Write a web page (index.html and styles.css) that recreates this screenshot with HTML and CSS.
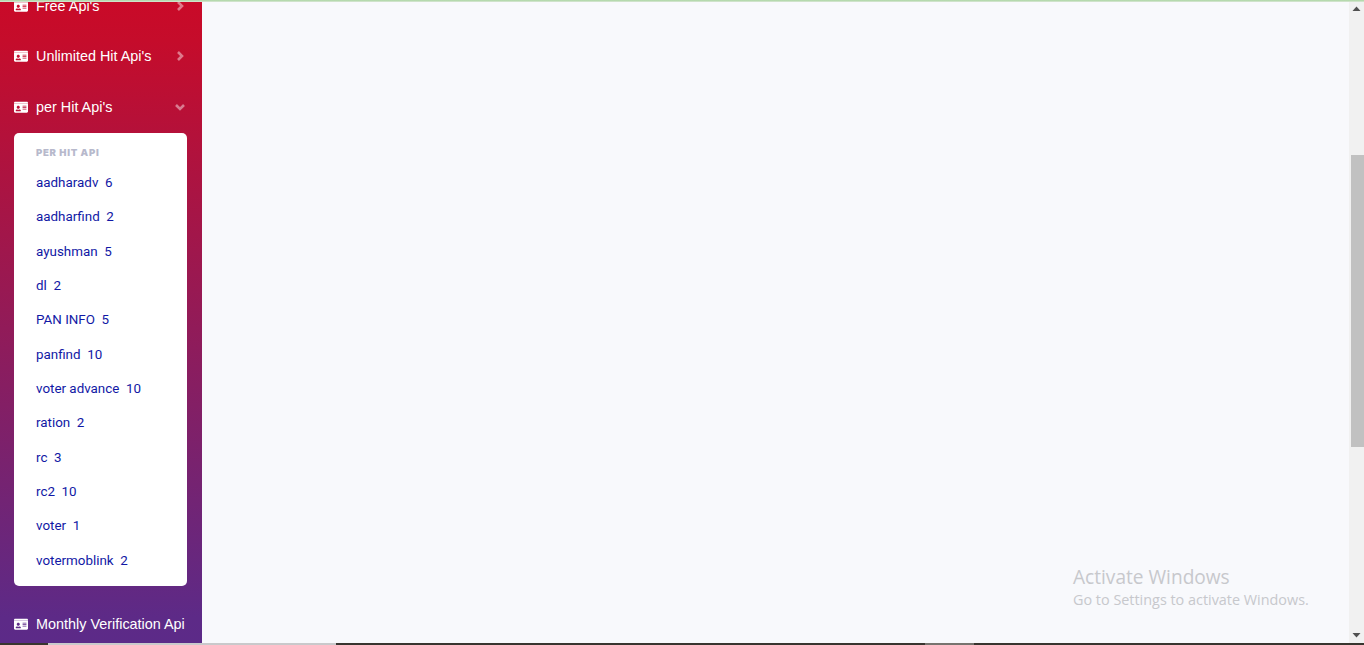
FILE: index.html
```html
<!DOCTYPE html>
<html lang="en">
<head>
<meta charset="utf-8">
<title>Per Hit Api</title>
<link rel="stylesheet" href="styles.css">
</head>
<body>
<div class="topline"></div>
<div class="app">
  <aside class="sidebar">
    <a class="nav-link first"><svg class="idcard" viewBox="0 0 576 512"><use href="#id"/></svg><span class="label">Free Api's</span><svg class="chev" viewBox="0 0 10 12"><polyline points="3,2 7,6 3,10"/></svg></a>
    <a class="nav-link"><svg class="idcard" viewBox="0 0 576 512"><path id="id" d="M528 32H48C21.5 32 0 53.5 0 80v30h576V80c0-26.500-21.500-48-48-48zM0 432c0 26.500 21.500 48 48 48h480c26.500 0 48-21.500 48-48V118H0v314zm352-232c0-4.400 3.600-8 8-8h144c4.400 0 8 3.600 8 8v16c0 4.400-3.600 8-8 8H360c-4.400 0-8-3.600-8-8v-16zm0 64c0-4.400 3.600-8 8-8h144c4.400 0 8 3.600 8 8v16c0 4.400-3.600 8-8 8H360c-4.400 0-8-3.600-8-8v-16zm0 64c0-4.400 3.600-8 8-8h144c4.400 0 8 3.600 8 8v16c0 4.400-3.600 8-8 8H360c-4.400 0-8-3.600-8-8v-16zM176 192c35.300 0 64 28.700 64 64s-28.700 64-64 64-64-28.700-64-64 28.700-64 64-64zM67.100 396.200C75.500 370.500 99.600 352 128 352h8.200c12.300 5.100 25.700 8 39.800 8s27.600-2.900 39.800-8h8.200c28.400 0 52.500 18.500 60.900 44.200 3.200 9.900-5.200 19.800-15.600 19.800H82.700c-10.400 0-18.800-10-15.600-19.800z"/></svg><span class="label">Unlimited Hit Api's</span><svg class="chev" viewBox="0 0 10 12"><polyline points="3,2 7,6 3,10"/></svg></a>
    <a class="nav-link"><svg class="idcard" viewBox="0 0 576 512"><use href="#id"/></svg><span class="label">per Hit Api's</span><svg class="chev" viewBox="0 0 10 12"><polyline points="1,4 5,8 9,4"/></svg></a>
    <div class="submenu">
      <h6 class="sub-title">Per Hit Api</h6>
      <a class="sub-item">aadharadv&nbsp; 6</a>
      <a class="sub-item">aadharfind&nbsp; 2</a>
      <a class="sub-item">ayushman&nbsp; 5</a>
      <a class="sub-item">dl&nbsp; 2</a>
      <a class="sub-item">PAN INFO&nbsp; 5</a>
      <a class="sub-item">panfind&nbsp; 10</a>
      <a class="sub-item">voter advance&nbsp; 10</a>
      <a class="sub-item">ration&nbsp; 2</a>
      <a class="sub-item">rc&nbsp; 3</a>
      <a class="sub-item">rc2&nbsp; 10</a>
      <a class="sub-item">voter&nbsp; 1</a>
      <a class="sub-item">votermoblink&nbsp; 2</a>
    </div>
    <a class="nav-link last"><svg class="idcard" viewBox="0 0 576 512"><use href="#id"/></svg><span class="label">Monthly Verification Api</span></a>
  </aside>
  <main class="content"></main>
  <div class="scrollbar">
    <svg class="arrow" viewBox="0 0 15 15"><polygon points="7.500,4.500 11.500,9 3.500,9"/></svg>
    <div class="thumb"></div>
    <svg class="arrow bottom" viewBox="0 0 15 15"><polygon points="3.500,5 11.500,5 7.500,9.500"/></svg>
  </div>
</div>
<div class="taskstrip">
  <span class="seg dark s1"></span><span class="seg light s2"></span><span class="seg dark s3"></span><span class="seg mid s4"></span><span class="seg dark s5"></span>
</div>
<div class="activate">
  <div class="act-title">Activate Windows</div>
  <div class="act-sub">Go to Settings to activate Windows.</div>
</div>
</body>
</html>
```
FILE: styles.css
```css
* { box-sizing: border-box; }
html, body { margin: 0; height: 100%; overflow: hidden; }
body {
  display: flex;
  flex-direction: column;
  background: #f8f9fc;
  font-family: "Liberation Sans", Arial, sans-serif;
}
.topline { height: 2px; flex: none; background: linear-gradient(#a9d5a0, #dbe8d8); }
.app { flex: 1; min-height: 0; display: flex; }
.sidebar {
  width: 202px;
  flex: none;
  overflow: hidden;
  padding: 0 14px;
  background: linear-gradient(180deg, #c90a28 0%, #c50c2b 6%, #5d2a87 96%, #5c2a88 100%);
}
.nav-link {
  display: flex;
  align-items: center;
  height: 50.500px;
  color: #fff;
  font-size: 14.400px;
}
.nav-link.first { margin-top: -21.400px; }
.nav-link.last { margin-top: 13px; }
.idcard { width: 14px; height: 12.500px; fill: #fff; flex: none; margin-right: 8px; }
.label { flex: 1; white-space: nowrap; }
.chev { width: 10px; height: 12px; flex: none; fill: none; stroke: rgba(255,255,255,.45); stroke-width: 2.600; margin-right: 3px; }
.submenu {
  margin-top: 0.400px;
  height: 453px;
  width: 173px;
  background: #fff;
  border-radius: 5px;
  padding: 8px 0 0 22px;
}
.sub-title {
  margin: 6px 0 7.700px;
  font-family: Inter, sans-serif;
  font-weight: 900;
  font-size: 9.600px;
  line-height: 11px;
  letter-spacing: .7px;
  text-transform: uppercase;
  color: #b7b9cc;
}
.sub-item {
  display: flex;
  align-items: center;
  height: 34.360px;
  font-family: Roboto, sans-serif;
  font-size: 13.400px;
  color: #1118a5;
  white-space: nowrap;
}
.content { flex: 1; min-width: 0; }
.scrollbar {
  width: 15px;
  flex: none;
  display: flex;
  flex-direction: column;
  background: #f1f1f1;
}
.arrow { width: 15px; height: 15px; flex: none; fill: #505050; }
.arrow.bottom { margin-top: auto; }
.thumb { height: 292px; margin: 138px 0 0 2px; background: #c1c1c1; flex: none; }
.taskstrip { height: 2px; flex: none; display: flex; }
.seg { display: block; height: 100%; }
.dark { background: #38352f; }
.light { background: #c9c9cb; }
.mid { background: #77746f; }
.s1 { width: 48px; }
.s2 { width: 288px; }
.s3 { width: 589px; }
.s4 { width: 49px; }
.s5 { flex: 1; }
.activate {
  position: absolute;
  left: 1073px;
  top: 565px;
  font-family: "Open Sans", sans-serif;
  color: #c7c8cc;
  white-space: nowrap;
}
.act-title { font-size: 19.100px; line-height: 25px; }
.act-sub { font-size: 14.400px; line-height: 20px; }
```
